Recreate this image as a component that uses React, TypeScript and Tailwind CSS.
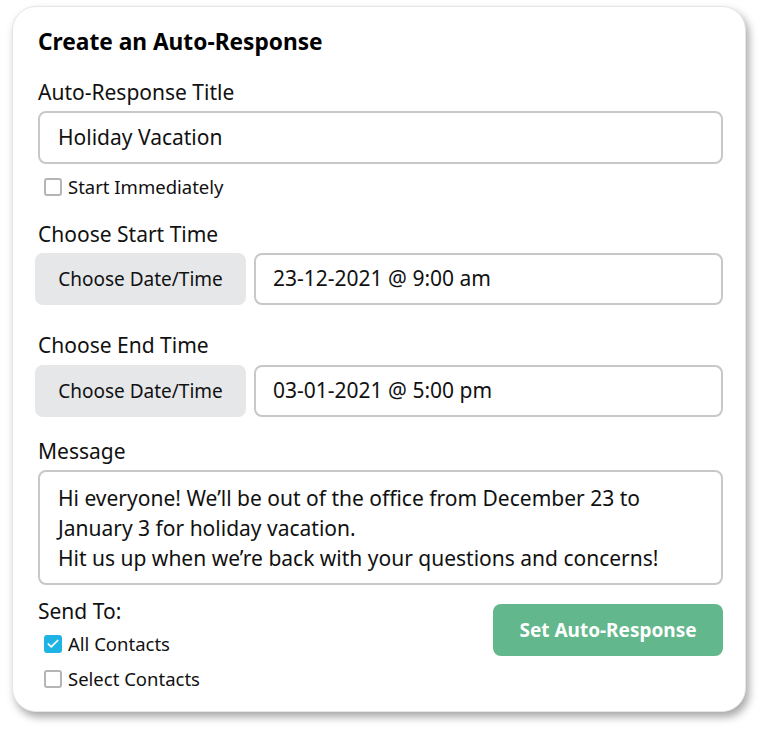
import { Check } from 'lucide-react';

const font = { fontFamily: '"Noto Sans", "Open Sans", sans-serif' };

const Checkbox = ({ checked, label }: { checked?: boolean; label: string }) => (
  <label className="flex items-center h-6 ml-[6px] gap-[6px] text-[18.5px] text-[#111]">
    {checked ? (
      <span className="w-[18px] h-[18px] rounded-[3px] bg-[#1fb3e5] flex items-center justify-center">
        <Check size={14} strokeWidth={3} color="#fff" />
      </span>
    ) : (
      <span className="w-[18px] h-[18px] rounded-[3px] border-2 border-[#b5b5b5] bg-white" />
    )}
    {label}
  </label>
);

const DateRow = ({ value }: { value: string }) => (
  <div className="flex gap-2 -ml-[3px] h-[52px]">
    <button className="w-[211px] shrink-0 rounded-lg bg-[#e6e7e9] text-[19px] text-[#111]">
      Choose Date/Time
    </button>
    <div className="flex-1 flex items-center rounded-lg border-2 border-[#c8c8c8] px-[17px] text-[21px] text-[#111]">
      {value}
    </div>
  </div>
);

export default function App() {
  return (
    <div className="w-[758px] h-[732px] bg-white pt-[6px] pl-[12px]" style={font}>
      <div className="w-[734px] h-[706px] rounded-[24px] bg-white border border-[#e6e6e6] shadow-[3px_5px_8px_rgba(0,0,0,0.35)] pt-[21px] pl-[25px] pr-[22px]">
        <h1 className="text-[22.7px] leading-7 font-bold text-black">Create an Auto-Response</h1>

        <div className="mt-[22px] text-[21px] leading-7 text-[#111]">Auto-Response Title</div>
        <div className="mt-[5px] h-[53px] rounded-lg border-2 border-[#c8c8c8] flex items-center px-[18px] text-[21px] text-[#111]">
          Holiday Vacation
        </div>
        <div className="mt-[11px]">
          <Checkbox label="Start Immediately" />
        </div>

        <div className="mt-[21px] text-[21px] leading-7 text-[#111]">Choose Start Time</div>
        <div className="mt-[5px]">
          <DateRow value="23-12-2021 @ 9:00 am" />
        </div>

        <div className="mt-[26px] text-[21px] leading-7 text-[#111]">Choose End Time</div>
        <div className="mt-[6px]">
          <DateRow value="03-01-2021 @ 5:00 pm" />
        </div>

        <div className="mt-[20px] text-[21px] leading-7 text-[#111]">Message</div>
        <div className="mt-[5px] h-[115px] rounded-lg border-2 border-[#c8c8c8] px-[18px] pt-[11px] text-[21px] leading-[30px] text-[#111]">
          Hi everyone! We’ll be out of the office from December 23 to
          <br />
          January 3 for holiday vacation.
          <br />
          Hit us up when we’re back with your questions and concerns!
        </div>

        <div className="flex justify-between items-start mt-3">
          <div>
            <div className="text-[21px] leading-7 text-[#111]">Send To:</div>
            <div className="mt-[7px]">
              <Checkbox checked label="All Contacts" />
            </div>
            <div className="mt-[11px]">
              <Checkbox label="Select Contacts" />
            </div>
          </div>
          <button className="mt-[7px] w-[230px] h-[52px] rounded-lg bg-[#62b78c] text-white text-[19px] font-bold">
            Set Auto-Response
          </button>
        </div>
      </div>
    </div>
  );
}
